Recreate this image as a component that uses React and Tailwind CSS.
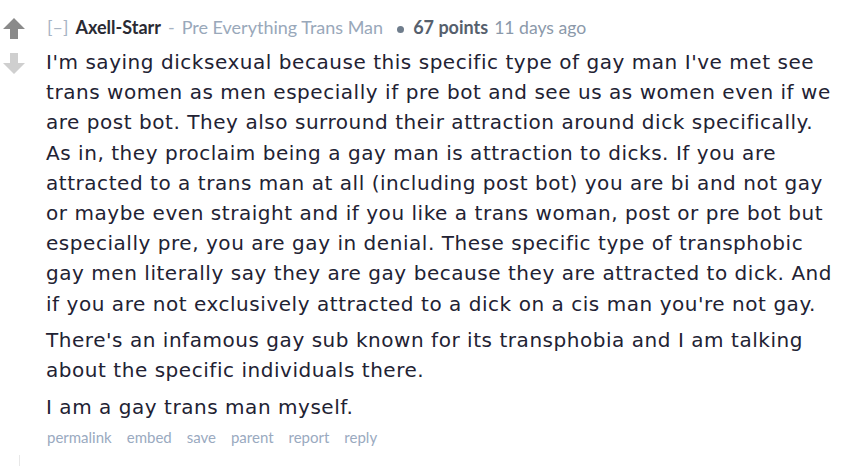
import React from "react";

function Up({ className }) {
  return (
    <svg viewBox="0 0 22 21" className={className}>
      <path d="M11 0 L22 11 L15 11 L15 21 L7 21 L7 11 L0 11 Z" fill="currentColor" />
    </svg>
  );
}
function Down({ className }) {
  return (
    <svg viewBox="0 0 22 21" className={className}>
      <path d="M11 21 L22 10 L15 10 L15 0 L7 0 L7 10 L0 10 Z" fill="currentColor" />
    </svg>
  );
}

const p1 = [
  "I'm saying dicksexual because this specific type of gay man I've met see",
  "trans women as men especially if pre bot and see us as women even if we",
  "are post bot. They also surround their attraction around dick specifically.",
  "As in, they proclaim being a gay man is attraction to dicks. If you are",
  "attracted to a trans man at all (including post bot) you are bi and not gay",
  "or maybe even straight and if you like a trans woman, post or pre bot but",
  "especially pre, you are gay in denial. These specific type of transphobic",
  "gay men literally say they are gay because they are attracted to dick. And",
  "if you are not exclusively attracted to a dick on a cis man you're not gay.",
];
const p2 = [
  "There's an infamous gay sub known for its transphobia and I am talking",
  "about the specific individuals there.",
];

export default function App() {
  const lato = { fontFamily: "Lato, 'Open Sans', sans-serif" };
  return (
    <div className="w-[854px] h-[466px] bg-white overflow-hidden relative">
      <div className="flex">
        <div className="w-[46px] shrink-0 flex flex-col items-start pl-[3px] pt-[18px]">
          <Up className="w-[22px] h-[21px] text-[#8a8a8a]" />
          <Down className="w-[22px] h-[21px] mt-[14px] text-[#cfcfcf]" />
        </div>
        <div className="flex-1 pt-[14px]">
          <div className="flex items-baseline text-[18px] leading-[26px]" style={lato}>
            <span className="text-[#a8b4c4] ml-[1px] mr-[7px]">[–]</span>
            <span className="font-bold text-[#2a2a33]">Axell-Starr</span>
            <span className="text-[#a8b4c4] ml-[7px] mr-[7px]">-</span>
            <span className="text-[#99a8ba]">Pre Everything Trans Man</span>
            <span className="inline-block w-[7px] h-[7px] rounded-full bg-[#6f7d8c] ml-[14px] mr-[9px] self-center mt-[4px]"></span>
            <span className="font-bold text-[#56606d]">67 points</span>
            <span className="text-[#8b99aa] text-[17.6px] ml-[6px]">11 days ago</span>
          </div>
          <div
            className="whitespace-nowrap text-[20px] leading-[30.2px] tracking-[0.54px] text-[#222233] mt-[6px]"
            style={{ fontFamily: "Verdana, 'DejaVu Sans', sans-serif" }}
          >
            <p>
              {p1.map((l, i) => (
                <span key={i} className="block">{l}</span>
              ))}
            </p>
            <p className="mt-[6px]">
              {p2.map((l, i) => (
                <span key={i} className="block">{l}</span>
              ))}
            </p>
            <p className="mt-[7px]">I am a gay trans man myself.</p>
          </div>
          <div className="flex gap-[15px] text-[15px] text-[#9aaabf] mt-[4px] ml-[1px]" style={lato}>
            <span>permalink</span>
            <span>embed</span>
            <span>save</span>
            <span>parent</span>
            <span>report</span>
            <span>reply</span>
          </div>
        </div>
      </div>
      <div className="absolute left-[19px] top-[455px] w-px h-[11px] bg-[#e8e8e8]"></div>
    </div>
  );
}
